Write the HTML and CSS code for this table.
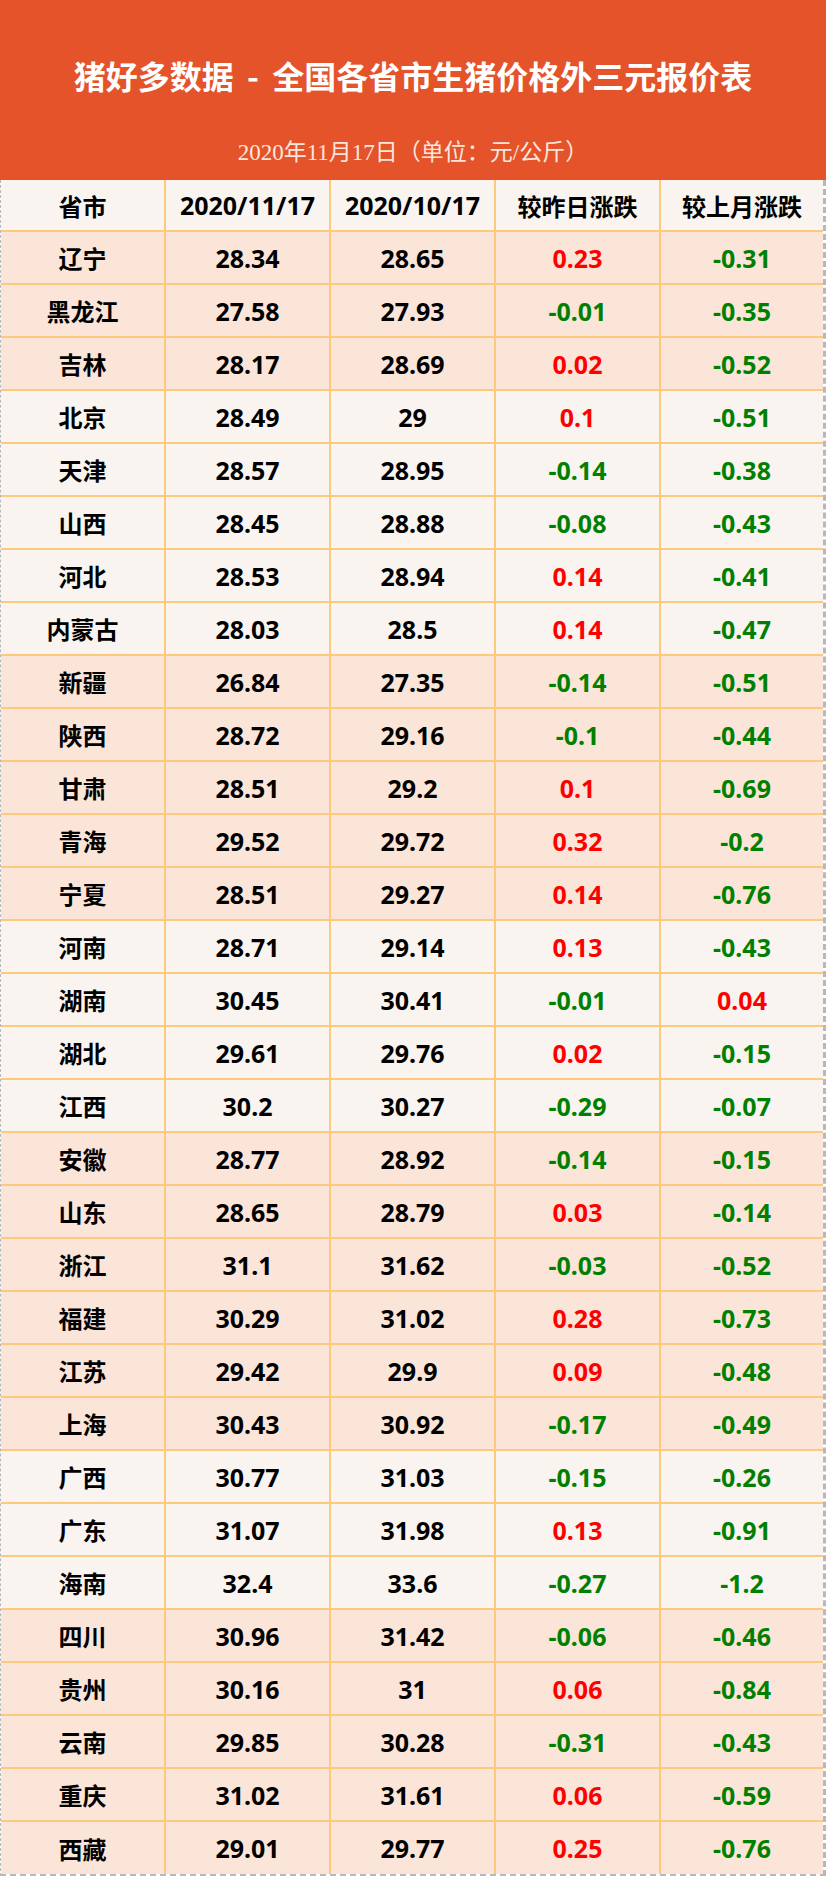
FILE: index.html
```html
<!DOCTYPE html>
<html lang="zh-CN">
<head>
<meta charset="utf-8">
<title>猪好多数据 - 全国各省市生猪价格外三元报价表</title>
<link rel="stylesheet" href="styles.css">
</head>
<body>
<div class="page">
  <header class="banner">
    <h1 class="title">猪好多数据<span class="sep"> - </span>全国各省市生猪价格外三元报价表</h1>
    <p class="subtitle">2020年11月17日（单位：元/公斤）</p>
  </header>
  <div class="table">
    <div class="row head"><div class="cell name">省市</div><div class="cell">2020/11/17</div><div class="cell">2020/10/17</div><div class="cell name">较昨日涨跌</div><div class="cell name">较上月涨跌</div></div>
    <div class="row pink"><div class="cell name">辽宁</div><div class="cell">28.34</div><div class="cell">28.65</div><div class="cell up">0.23</div><div class="cell down">-0.31</div></div>
    <div class="row pink"><div class="cell name">黑龙江</div><div class="cell">27.58</div><div class="cell">27.93</div><div class="cell down">-0.01</div><div class="cell down">-0.35</div></div>
    <div class="row pink"><div class="cell name">吉林</div><div class="cell">28.17</div><div class="cell">28.69</div><div class="cell up">0.02</div><div class="cell down">-0.52</div></div>
    <div class="row cream"><div class="cell name">北京</div><div class="cell">28.49</div><div class="cell">29</div><div class="cell up">0.1</div><div class="cell down">-0.51</div></div>
    <div class="row cream"><div class="cell name">天津</div><div class="cell">28.57</div><div class="cell">28.95</div><div class="cell down">-0.14</div><div class="cell down">-0.38</div></div>
    <div class="row cream"><div class="cell name">山西</div><div class="cell">28.45</div><div class="cell">28.88</div><div class="cell down">-0.08</div><div class="cell down">-0.43</div></div>
    <div class="row cream"><div class="cell name">河北</div><div class="cell">28.53</div><div class="cell">28.94</div><div class="cell up">0.14</div><div class="cell down">-0.41</div></div>
    <div class="row cream"><div class="cell name">内蒙古</div><div class="cell">28.03</div><div class="cell">28.5</div><div class="cell up">0.14</div><div class="cell down">-0.47</div></div>
    <div class="row pink"><div class="cell name">新疆</div><div class="cell">26.84</div><div class="cell">27.35</div><div class="cell down">-0.14</div><div class="cell down">-0.51</div></div>
    <div class="row pink"><div class="cell name">陕西</div><div class="cell">28.72</div><div class="cell">29.16</div><div class="cell down">-0.1</div><div class="cell down">-0.44</div></div>
    <div class="row pink"><div class="cell name">甘肃</div><div class="cell">28.51</div><div class="cell">29.2</div><div class="cell up">0.1</div><div class="cell down">-0.69</div></div>
    <div class="row pink"><div class="cell name">青海</div><div class="cell">29.52</div><div class="cell">29.72</div><div class="cell up">0.32</div><div class="cell down">-0.2</div></div>
    <div class="row pink"><div class="cell name">宁夏</div><div class="cell">28.51</div><div class="cell">29.27</div><div class="cell up">0.14</div><div class="cell down">-0.76</div></div>
    <div class="row cream"><div class="cell name">河南</div><div class="cell">28.71</div><div class="cell">29.14</div><div class="cell up">0.13</div><div class="cell down">-0.43</div></div>
    <div class="row cream"><div class="cell name">湖南</div><div class="cell">30.45</div><div class="cell">30.41</div><div class="cell down">-0.01</div><div class="cell up">0.04</div></div>
    <div class="row cream"><div class="cell name">湖北</div><div class="cell">29.61</div><div class="cell">29.76</div><div class="cell up">0.02</div><div class="cell down">-0.15</div></div>
    <div class="row cream"><div class="cell name">江西</div><div class="cell">30.2</div><div class="cell">30.27</div><div class="cell down">-0.29</div><div class="cell down">-0.07</div></div>
    <div class="row pink"><div class="cell name">安徽</div><div class="cell">28.77</div><div class="cell">28.92</div><div class="cell down">-0.14</div><div class="cell down">-0.15</div></div>
    <div class="row pink"><div class="cell name">山东</div><div class="cell">28.65</div><div class="cell">28.79</div><div class="cell up">0.03</div><div class="cell down">-0.14</div></div>
    <div class="row pink"><div class="cell name">浙江</div><div class="cell">31.1</div><div class="cell">31.62</div><div class="cell down">-0.03</div><div class="cell down">-0.52</div></div>
    <div class="row pink"><div class="cell name">福建</div><div class="cell">30.29</div><div class="cell">31.02</div><div class="cell up">0.28</div><div class="cell down">-0.73</div></div>
    <div class="row pink"><div class="cell name">江苏</div><div class="cell">29.42</div><div class="cell">29.9</div><div class="cell up">0.09</div><div class="cell down">-0.48</div></div>
    <div class="row pink"><div class="cell name">上海</div><div class="cell">30.43</div><div class="cell">30.92</div><div class="cell down">-0.17</div><div class="cell down">-0.49</div></div>
    <div class="row cream"><div class="cell name">广西</div><div class="cell">30.77</div><div class="cell">31.03</div><div class="cell down">-0.15</div><div class="cell down">-0.26</div></div>
    <div class="row cream"><div class="cell name">广东</div><div class="cell">31.07</div><div class="cell">31.98</div><div class="cell up">0.13</div><div class="cell down">-0.91</div></div>
    <div class="row cream"><div class="cell name">海南</div><div class="cell">32.4</div><div class="cell">33.6</div><div class="cell down">-0.27</div><div class="cell down">-1.2</div></div>
    <div class="row pink"><div class="cell name">四川</div><div class="cell">30.96</div><div class="cell">31.42</div><div class="cell down">-0.06</div><div class="cell down">-0.46</div></div>
    <div class="row pink"><div class="cell name">贵州</div><div class="cell">30.16</div><div class="cell">31</div><div class="cell up">0.06</div><div class="cell down">-0.84</div></div>
    <div class="row pink"><div class="cell name">云南</div><div class="cell">29.85</div><div class="cell">30.28</div><div class="cell down">-0.31</div><div class="cell down">-0.43</div></div>
    <div class="row pink"><div class="cell name">重庆</div><div class="cell">31.02</div><div class="cell">31.61</div><div class="cell up">0.06</div><div class="cell down">-0.59</div></div>
    <div class="row pink last"><div class="cell name">西藏</div><div class="cell">29.01</div><div class="cell">29.77</div><div class="cell up">0.25</div><div class="cell down">-0.76</div></div>
  </div>
</div>
</body>
</html>
```
FILE: styles.css
```css
html, body {
  margin: 0;
  padding: 0;
  background: #ffffff;
}

.page {
  width: 826px;
}

.banner {
  height: 180px;
  box-sizing: border-box;
  background: #e4532a;
  padding-top: 59px;
  display: flex;
  flex-direction: column;
  align-items: center;
}

.title {
  margin: 0;
  font-family: "Noto Sans CJK SC", sans-serif;
  font-weight: 700;
  font-size: 32px;
  line-height: 32px;
  color: #ffffff;
  white-space: nowrap;
}

.title .sep {
  padding: 0 6px;
}

.subtitle {
  margin: 51px 0 0 0;
  font-family: "Liberation Serif", "Noto Sans CJK SC", serif;
  font-size: 23px;
  line-height: 22px;
  color: #fbe6dc;
  white-space: nowrap;
}

.table {
  border-left: 1px dashed #b8b8b8;
  border-right: 3px dashed #b8b8b8;
  border-bottom: 2px dashed #b8b8b8;
}

.row {
  display: grid;
  grid-template-columns: 165px 165px 165px 165px 1fr;
  height: 53px;
  box-sizing: border-box;
  border-bottom: 2px solid #fdc97c;
}

.row.head {
  height: 52px;
  background: #f9f4f0;
}

.row.last {
  height: 52px;
  border-bottom: none;
}

.row.pink {
  background: #fbe4d8;
}

.row.cream {
  background: #f9f4f0;
}

.cell {
  display: flex;
  align-items: center;
  justify-content: center;
  border-right: 2px solid #fdc97c;
  font-family: "Noto Sans", "Noto Sans CJK SC", sans-serif;
  font-weight: 700;
  font-size: 25px;
  color: #000000;
  white-space: nowrap;
}

.cell:last-child {
  border-right: none;
}

.cell.name {
  font-family: "Noto Sans CJK SC", sans-serif;
  font-size: 24px;
}

.cell.up {
  color: #ff0000;
}

.cell.down {
  color: #008000;
}
```
